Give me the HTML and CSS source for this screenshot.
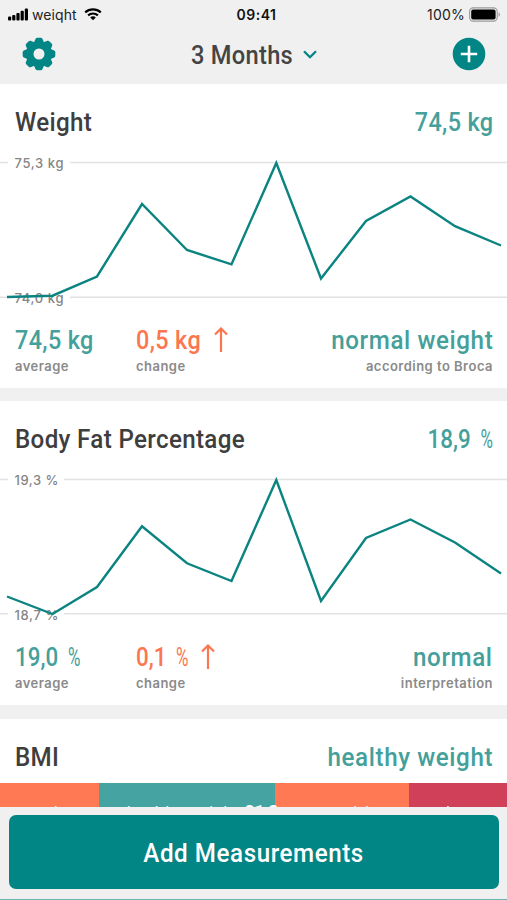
FILE: index.html
```html
<!DOCTYPE html>
<html lang="en">
<head>
    <meta charset="UTF-8">
    <meta name="viewport" content="width=device-width, initial-scale=1.0">
    <title>Weight</title>
    <link rel="stylesheet" href="styles.css">
</head>
<body>
    <div class="app">
        <!-- Status bar -->
        <div class="status-bar">
            <div class="status-left">
                <svg class="signal" width="20" height="13" viewBox="0 0 20 13">
                    <rect x="0" y="8.5" width="3.2" height="4" rx="1"/>
                    <rect x="4.2" y="7" width="3.2" height="5.5" rx="1"/>
                    <rect x="8.4" y="5" width="3.2" height="7.5" rx="1"/>
                    <rect x="12.6" y="2.8" width="3.2" height="9.7" rx="1"/>
                    <rect x="16.8" y="0.5" width="3.2" height="12" rx="1"/>
                </svg>
                <span class="carrier">weiqht</span>
                <svg class="wifi" width="18" height="13" viewBox="0 0 18 13">
                    <path d="M1.2 4.4C5.6 0.4 12.4 0.4 16.8 4.4" fill="none" stroke="#000" stroke-width="2.1"/>
                    <path d="M4.1 7.4C6.9 4.9 11.1 4.9 13.9 7.4" fill="none" stroke="#000" stroke-width="2.1"/>
                    <path d="M6.2 9.4C7.8 8 10.2 8 11.8 9.4L9 12.3Z"/>
                </svg>
            </div>
            <div class="status-time">09:41</div>
            <div class="status-right">
                <span class="percent">100%</span>
                <svg class="battery" width="32" height="15" viewBox="0 0 32 15">
                    <rect x="0.6" y="0.9" width="27.6" height="13.2" rx="3.6" fill="#f0f0f0" stroke="#999" stroke-width="1.1"/>
                    <rect x="2.2" y="2.4" width="24.4" height="10.2" rx="2"/>
                    <path d="M29.6 5.2C31.4 6 31.4 9 29.6 9.8Z" fill="#999"/>
                </svg>
            </div>
        </div>

        <!-- Navigation -->
        <div class="nav">
            <svg class="icon" width="34" height="34" viewBox="-17 -17 34 34">
                <g fill="#028585">
                    <path id="tooth" d="M-5.4 -10.5L-3.4 -15.2Q-2.9 -16.3 -1.8 -16.3H1.8Q2.9 -16.3 3.4 -15.2L5.4 -10.5Z"/>
                    <use href="#tooth" transform="rotate(45)"/>
                    <use href="#tooth" transform="rotate(90)"/>
                    <use href="#tooth" transform="rotate(135)"/>
                    <use href="#tooth" transform="rotate(180)"/>
                    <use href="#tooth" transform="rotate(225)"/>
                    <use href="#tooth" transform="rotate(270)"/>
                    <use href="#tooth" transform="rotate(315)"/>
                </g>
                <circle r="9" fill="none" stroke="#028585" stroke-width="8"/>
                <circle r="5.5" fill="#f0f0f0"/>
            </svg>
            <div class="period">
                <span class="period-name">3 Months</span>
                <svg width="14" height="9" viewBox="0 0 14 9">
                    <path d="M1 1.2L7 7.2L13 1.2" fill="none" stroke="#028585" stroke-width="2.3"/>
                </svg>
            </div>
            <svg class="icon" width="34" height="34" viewBox="-17 -17 34 34">
                <circle r="16.3" fill="#028585"/>
                <path d="M-8.2 0H8.2M0 -8.2V8.2" stroke="#fff" stroke-width="2.6"/>
            </svg>
        </div>

        <div class="content">
            <!-- Weight -->
            <div class="card">
                <div class="card-header">
                    <span class="title">Weight</span>
                    <span class="value number">74,5 kg</span>
                </div>
                <svg class="chart" width="507" height="136" viewBox="0 0 507 136">
                    <path class="grid" d="M0 0.5H8M70 0.5H507M0 135.3H8M70 135.3H507"/>
                    <text class="axis" x="14.5" y="5.7" textLength="49">75,3 kg</text>
                    <text class="axis" x="14.5" y="140.7" textLength="49">74,0 kg</text>
                    <polyline class="line" points="7,135 52.5,133.7 97,114.5 142,42 187,88 231.5,102.3 276.3,1 321,116.5 366,59 410.5,34.5 455,64.2 501,83.5"/>
                </svg>
                <div class="stats">
                    <div class="stat stat-average">
                        <span class="value number">74,5 kg</span>
                        <span class="label">average</span>
                    </div>
                    <div class="stat stat-change">
                        <div class="change">
                            <span class="value number">0,5 kg</span>
                            <svg class="arrow" width="14" height="26" viewBox="0 0 14 26">
                                <path d="M7 25V1.7M1 7.5L7 1.5L13 7.5" fill="none" stroke="#fc7650" stroke-width="2.2"/>
                            </svg>
                        </div>
                        <span class="label">change</span>
                    </div>
                    <div class="stat stat-right">
                        <span class="value words">normal weight</span>
                        <span class="label">according to Broca</span>
                    </div>
                </div>
            </div>

            <!-- Body fat -->
            <div class="card">
                <div class="card-header">
                    <span class="title">Body Fat Percentage</span>
                    <span class="value percentage">18,9 <i class="sign">%</i></span>
                </div>
                <svg class="chart" width="507" height="136" viewBox="0 0 507 136">
                    <path class="grid" d="M0 0.5H8M64 0.5H507M0 134.8H8M64 134.8H507"/>
                    <text class="axis" x="14.5" y="6" textLength="44">19,3 %</text>
                    <text class="axis" x="14.5" y="141" textLength="44">18,7 %</text>
                    <polyline class="line" points="7,117.5 52.5,135 97,108 142,47.3 187,84.3 231.5,102 276.3,1 321,122 366,59 410.5,40.5 455,63.5 501,94.5"/>
                </svg>
                <div class="stats">
                    <div class="stat stat-average">
                        <span class="value percentage">19,0 <i class="sign">%</i></span>
                        <span class="label">average</span>
                    </div>
                    <div class="stat stat-change">
                        <div class="change">
                            <span class="value percentage">0,1 <i class="sign">%</i></span>
                            <svg class="arrow" width="14" height="26" viewBox="0 0 14 26">
                                <path d="M7 25V1.7M1 7.5L7 1.5L13 7.5" fill="none" stroke="#fc7650" stroke-width="2.2"/>
                            </svg>
                        </div>
                        <span class="label">change</span>
                    </div>
                    <div class="stat stat-right">
                        <span class="value words">normal</span>
                        <span class="label">interpretation</span>
                    </div>
                </div>
            </div>

            <!-- BMI -->
            <div class="card card-bmi">
                <div class="card-header">
                    <span class="title">BMI</span>
                    <span class="value words">healthy weight</span>
                </div>
                <div class="scale">
                    <div class="segment low">under</div>
                    <div class="segment healthy">healthy weight <b>21,3</b></div>
                    <div class="segment over">overweight</div>
                    <div class="segment obese">obese</div>
                </div>
            </div>
        </div>

        <div class="footer">
            <button class="add-button"><span>Add Measurements</span></button>
        </div>
    </div>
</body>
</html>
```

FILE: styles.css
```css
* {
    box-sizing: border-box;
}

body {
    margin: 0;
    font-family: Roboto, "Liberation Sans", sans-serif;
    background-color: #f0f0f0;
}

.app {
    display: flex;
    flex-direction: column;
    width: 507px;
    height: 900px;
    overflow: hidden;
    border-bottom: 1px solid #6fb5b3;
}

svg {
    display: block;
    flex-shrink: 0;
}

/* Status bar */
.status-bar {
    display: grid;
    grid-template-columns: 1fr auto 1fr;
    align-items: center;
    height: 28px;
    padding: 0 6px 0 8px;
    font-family: Inter, "Liberation Sans", sans-serif;
    font-size: 14px;
    color: #222;
}

.status-left,
.status-right {
    display: flex;
    align-items: center;
}

.status-right {
    justify-content: flex-end;
}

.carrier {
    margin: 0 7px 0 4px;
    letter-spacing: 0.1px;
}

.percent {
    margin-right: 4px;
    letter-spacing: 0.2px;
}

.status-time {
    margin-left: 4px;
    font-weight: 600;
    color: #111;
    letter-spacing: 0.5px;
}

/* Navigation */
.nav {
    display: flex;
    justify-content: space-between;
    align-items: center;
    height: 56px;
    padding: 0 21px 4px 22px;
}

.period {
    display: flex;
    align-items: center;
    gap: 9px;
    padding-top: 1px;
    font-size: 26px;
    font-weight: 500;
    color: #444;
}

.period-name {
    margin-right: -10px;
    letter-spacing: 0.3px;
    transform: scaleX(0.91);
    transform-origin: left;
}

/* Cards */
.content {
    flex: 1;
    overflow: hidden;
}

.card {
    height: 304px;
    margin-bottom: 13.3px;
    background-color: #fff;
}

.card-header {
    display: flex;
    justify-content: space-between;
    align-items: center;
    height: 78px;
    padding: 0 14px 2px 15px;
}

/* Headings and values are set slightly condensed */
.title,
.value {
    font-size: 26px;
    font-weight: 500;
    line-height: 30px;
    color: #3e3e3e;
    white-space: nowrap;
    transform-origin: left;
}

.title {
    letter-spacing: 0.35px;
    transform: scaleX(0.93);
}

.value {
    color: #459f9b;
}

.card-header .value,
.stat-right .value {
    transform-origin: right;
}

.words {
    letter-spacing: 0.65px;
    transform: scaleX(0.93);
}

.number {
    letter-spacing: 0.4px;
    transform: scaleX(0.9);
}

.percentage {
    transform: scaleX(0.86);
}

/* Narrow, lighter percent sign */
.sign {
    display: inline-block;
    font-style: normal;
    font-weight: 400;
    transform: scaleX(0.76);
    transform-origin: right;
}

/* Chart */
.chart {
    overflow: visible;
}

.grid {
    fill: none;
    stroke: #e2e2e2;
    stroke-width: 1.6;
}

.axis {
    font-family: Inter, "Liberation Sans", sans-serif;
    font-size: 13px;
    font-weight: 500;
    fill: #858585;
}

.line {
    fill: none;
    stroke: #0b8481;
    stroke-width: 2.4;
}

/* Stats */
.stats {
    display: flex;
    padding: 27px 14px 0 15px;
}

.stat {
    display: flex;
    flex-direction: column;
}

.stat-average {
    width: 121px;
}

.stat-right {
    margin-left: auto;
    align-items: flex-end;
}

.change {
    display: flex;
    align-items: center;
    gap: 13px;
}

.change .value {
    margin-right: -7px;
    color: #fc7650;
}

.change .percentage {
    margin-right: -9px;
}

.label {
    font-family: Inter, "Liberation Sans", sans-serif;
    font-size: 13px;
    font-weight: 600;
    line-height: 16px;
    margin-top: 3px;
    letter-spacing: 0.48px;
    color: #8a8a8a;
}

/* BMI scale */
.card-bmi {
    height: 100px;
}

.card-bmi .card-header {
    height: 64px;
    padding-top: 14px;
}

.scale {
    display: flex;
    height: 36px;
}

.segment {
    padding-top: 20px;
    font-size: 15px;
    line-height: 18px;
    text-align: center;
    white-space: nowrap;
    color: #fff;
}

.low {
    width: 99px;
    padding-left: 4px;
    background-color: #ff7a54;
}

.healthy {
    width: 175.5px;
    padding-left: 28px;
    text-align: left;
    letter-spacing: 1.1px;
    background-color: #45a3a1;
}

/* Current reading, runs over into the next segment */
.healthy b {
    position: relative;
    z-index: 1;
    margin-left: 1px;
    font-size: 17px;
    line-height: 0;
    letter-spacing: 0;
}

.over {
    width: 134.5px;
    background-color: #ff7a54;
}

.obese {
    flex: 1;
    background-color: #d04059;
}

/* Footer */
.footer {
    height: 92px;
    padding: 8px 8px 10px 9px;
    background-color: #f0f0f0;
}

.add-button {
    display: block;
    width: 100%;
    height: 74px;
    padding: 2px 0 0;
    border: none;
    border-radius: 7px;
    background-color: #028585;
    color: #fff;
    font-family: inherit;
    font-size: 26px;
    font-weight: 500;
}

.add-button span {
    display: inline-block;
    letter-spacing: 0.6px;
    transform: scaleX(0.93);
}
```
